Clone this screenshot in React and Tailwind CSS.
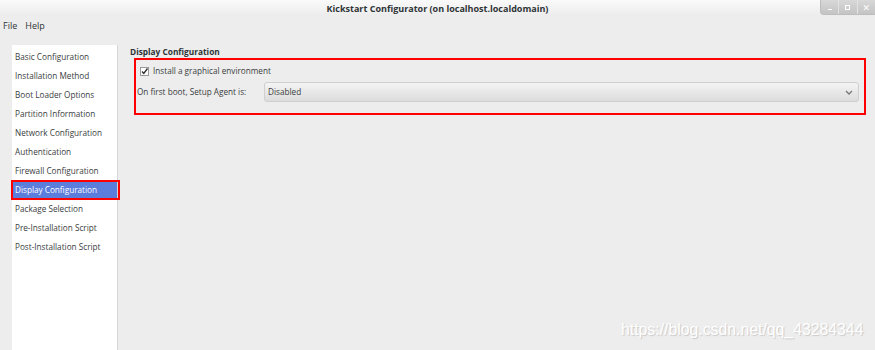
import React from "react";

const items = [
  "Basic Configuration",
  "Installation Method",
  "Boot Loader Options",
  "Partition Information",
  "Network Configuration",
  "Authentication",
  "Firewall Configuration",
  "Display Configuration",
  "Package Selection",
  "Pre-Installation Script",
  "Post-Installation Script",
];

export default function App() {
  return (
    <div
      className="w-[875px] h-[350px] overflow-hidden bg-[#ededed] text-[#3a3d3e] relative"
      style={{ fontFamily: '"Open Sans", "DejaVu Sans", sans-serif' }}
    >
      {/* Title bar */}
      <div className="h-[16px] bg-gradient-to-b from-[#fafafa] to-[#ececec] relative flex items-center justify-center">
        <span className="text-[9px] font-bold text-[#2e3436] leading-none">
          Kickstart Configurator (on localhost.localdomain)
        </span>
        <div className="absolute right-0 top-0 h-[15px] w-[55px] flex rounded-bl-[4px] overflow-hidden bg-gradient-to-b from-[#d8d8d8] to-[#c4c4c4] border-l border-b border-[#bdbdbd]">
          <div className="flex-1 flex items-end justify-center pb-[4px] border-r border-[#e2e2e2]">
            <div className="w-[4px] h-[1.5px] bg-white" />
          </div>
          <div className="flex-1 flex items-center justify-center border-r border-[#e2e2e2]">
            <div className="w-[5px] h-[5px] border border-white" />
          </div>
          <div className="flex-1 flex items-center justify-center text-white text-[9px] font-bold leading-none">
            ✕
          </div>
        </div>
      </div>

      {/* Menu */}
      <div className="h-[18px] flex items-center gap-[8px] px-[3px] pt-[2px] text-[9px] text-[#2e3436]">
        <span>File</span>
        <span>Help</span>
      </div>

      <div className="flex mt-[11px]">
        {/* Sidebar */}
        <div className="ml-[12px] w-[106px] h-[305px] bg-white border-r border-[#d5d5d5] pt-[3px] relative">
          {items.map((it) => {
            const sel = it === "Display Configuration";
            return (
              <div
                key={it}
                className={
                  "h-[19px] flex items-center pl-[3px] text-[8.2px] whitespace-nowrap " +
                  (sel ? "bg-[#5b7ddc] text-white" : "text-[#3a3d3e]")
                }
              >
                {it}
              </div>
            );
          })}
          <div className="absolute left-[-1px] top-[135px] w-[109px] h-[20px] border-2 border-[#ff0000]" />
        </div>

        {/* Content */}
        <div className="flex-1 pl-[12px] pr-[9px]">
          <div className="text-[8.3px] font-bold leading-none mt-[3px] text-[#2e3436]">Display Configuration</div>
          <div className="mt-[2px] ml-[4px] h-[57px] border-2 border-[#ff0000] pt-[6px] pl-[1px] pr-[5px]">
            <div className="flex items-center gap-[4px] pl-[3px] h-[10px]">
              <svg width="9" height="9" viewBox="0 0 9 9">
                <rect x="0.5" y="0.5" width="8" height="8" fill="#fff" stroke="#9a9a9a" />
                <path d="M2 4.5 L3.8 6.5 L7.5 1.5" stroke="#333" strokeWidth="1.4" fill="none" />
              </svg>
              <span className="text-[8.2px]">Install a graphical environment</span>
            </div>
            <div className="flex items-center mt-[6px]">
              <span className="text-[8.2px] w-[127px] whitespace-nowrap">On first boot, Setup Agent is:</span>
              <div className="flex-1 h-[20px] rounded-[3px] border border-[#cfcfcf] bg-gradient-to-b from-[#f4f4f4] to-[#dcdcdc] flex items-center justify-between pl-[3px] pr-[5px]">
                <span className="text-[8.2px]">Disabled</span>
                <svg width="8" height="5" viewBox="0 0 8 5">
                  <path d="M1 1 L4 4 L7 1" stroke="#777" strokeWidth="1.3" fill="none" />
                </svg>
              </div>
            </div>
          </div>
        </div>
      </div>

      {/* Watermark */}
      <div
        className="absolute left-[621px] top-[322px] text-[15.8px] text-white leading-none"
        style={{ fontFamily: '"Liberation Sans", Arial, sans-serif', textShadow: "1px 1px 1px #c8c8c8" }}
      >
        https://blog.csdn.net/qq_43284344
      </div>
    </div>
  );
}
